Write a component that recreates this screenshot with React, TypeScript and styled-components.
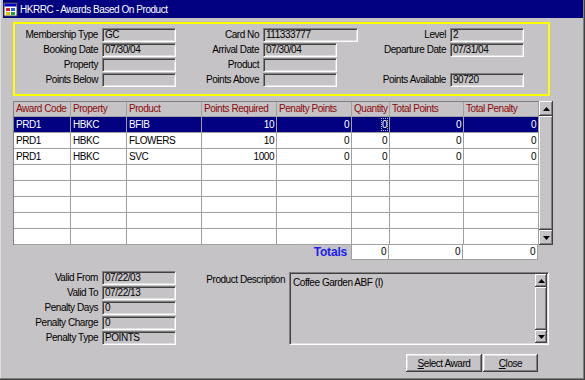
import React from 'react';
import styled, { createGlobalStyle } from 'styled-components';

const GlobalStyle = createGlobalStyle`
	html, body {
		margin: 0;
		padding: 0;
		background: #c6c3c6;
	}
	body {
		font-family: "Liberation Sans", Arial, sans-serif;
	}
`;

const Window = styled.div`
	width: 585px;
	height: 380px;
	box-sizing: border-box;
	padding: 0 2px 2px 3px;
	background: #c6c3c6;
	box-shadow: inset -1px -1px 0 #404040, inset -2px -2px 0 #808080, inset 1px 0 0 #dedede;
	font-family: "Liberation Sans", Arial, sans-serif;
	font-size: 10px;
	letter-spacing: -0.45px;
	color: #000;
	display: flex;
	flex-direction: column;
`;

const TitleBar = styled.div`
	height: 18px;
	flex: none;
	background: #000080;
	color: #fff;
	display: flex;
	align-items: center;
	gap: 2px;
	font-size: 10px;
	white-space: nowrap;
`;

const YellowBox = styled.div`
	margin: 4px 0 0 10px;
	width: 537px;
	height: 74px;
	box-sizing: border-box;
	border: 2px solid #ffff00;
	padding-top: 4px;
`;

const FieldGrid = styled.div<{ columns: string }>`
	display: grid;
	grid-template-columns: ${props => props.columns};
	grid-auto-rows: 14px;
	row-gap: 1px;
	align-items: center;
`;

const Label = styled.div`
	text-align: right;
	padding-right: 4px;
	white-space: nowrap;
	line-height: 14px;
`;

const Field = styled.div<{ width: number }>`
	width: ${props => props.width}px;
	height: 14px;
	box-sizing: border-box;
	border: 1px solid;
	border-color: #808080 #ffffff #ffffff #808080;
	box-shadow: inset 1px 1px 0 #404040, inset -1px -1px 0 #dfdfdf;
	padding-left: 2px;
	line-height: 12px;
	white-space: nowrap;
	overflow: hidden;
`;

const TableArea = styled.div`
	margin: 5px 0 0 10px;
	display: flex;
	align-items: flex-start;
`;

const TableGrid = styled.div<{ columns: string }>`
	display: grid;
	grid-template-columns: ${props => props.columns};
	border-top: 1px solid #808080;
	border-left: 1px solid #808080;
	background: #fff;
`;

const HeadCell = styled.div`
	height: 15px;
	box-sizing: border-box;
	background: #c6c3c6;
	color: #8b0a0a;
	border-right: 1px solid #a0a0a0;
	border-bottom: 1px solid #a0a0a0;
	padding-left: 2px;
	line-height: 14px;
	white-space: nowrap;
	overflow: hidden;
`;

const Cell = styled.div<{ right?: boolean, selected?: boolean }>`
	height: 16px;
	box-sizing: border-box;
	background: ${props => props.selected ? '#000080' : '#fff'};
	color: ${props => props.selected ? '#fff' : '#000'};
	border-right: 1px solid #a0a0a0;
	border-bottom: 1px solid #a0a0a0;
	padding: 0 2px;
	line-height: 15px;
	text-align: ${props => props.right ? 'right' : 'left'};
	white-space: nowrap;
	overflow: hidden;
`;

const FocusMark = styled.span`
	outline: 1px dotted #c0c0c0;
	outline-offset: 0;
`;

const ScrollBar = styled.div<{ width: number, height: number }>`
	width: ${props => props.width}px;
	height: ${props => props.height}px;
	flex: none;
	display: flex;
	flex-direction: column;
	background: #e4e2e4;
`;

const ScrollButton = styled.div<{ size: number }>`
	height: ${props => props.size}px;
	flex: none;
	display: flex;
	align-items: center;
	justify-content: center;
	background: #c6c3c6;
	box-shadow: inset -1px -1px 0 #404040, inset 1px 1px 0 #ffffff, inset -2px -2px 0 #808080;
`;

const ScrollThumb = styled.div`
	flex: 1;
	background: #c6c3c6;
	box-shadow: inset -1px -1px 0 #404040, inset 1px 1px 0 #ffffff, inset -2px -2px 0 #808080;
`;

const TotalsRow = styled.div`
	margin-left: 10px;
	display: flex;
	height: 15px;
`;

const TotalsLabel = styled.div`
	width: 338px;
	text-align: right;
	padding-right: 4px;
	box-sizing: border-box;
	font-size: 12px;
	font-weight: bold;
	letter-spacing: -0.2px;
	color: #1c1cf0;
	line-height: 15px;
`;

const TotalCell = styled.div<{ width: number, first?: boolean }>`
	width: ${props => props.width}px;
	box-sizing: border-box;
	background: #fff;
	border-right: 1px solid #a0a0a0;
	border-bottom: 1px solid #a0a0a0;
	border-left: ${props => props.first ? '1px solid #a0a0a0' : 'none'};
	text-align: right;
	padding-right: 2px;
	line-height: 14px;
`;

const BottomSection = styled.div`
	margin-top: 11px;
	padding-left: 12px;
	display: flex;
	align-items: flex-start;
`;

const DescLabel = styled(Label)`
	width: 113px;
	box-sizing: border-box;
	margin-top: 2px;
`;

const DescBox = styled.div`
	width: 260px;
	height: 73px;
	margin-top: 1px;
	box-sizing: border-box;
	border: 1px solid;
	border-color: #808080 #ffffff #ffffff #808080;
	box-shadow: inset 1px 1px 0 #404040, inset -1px -1px 0 #dfdfdf;
	display: flex;
	padding: 1px;
`;

const DescText = styled.div`
	flex: 1;
	padding: 3px 2px;
	white-space: nowrap;
`;

const ButtonRow = styled.div`
	margin-top: 9px;
	padding-right: 45px;
	display: flex;
	justify-content: flex-end;
	gap: 1px;
`;

const Button = styled.button<{ width: number }>`
	width: ${props => props.width}px;
	height: 18px;
	border: none;
	padding: 0;
	background: #c6c3c6;
	font: inherit;
	letter-spacing: inherit;
	color: #000;
	box-shadow: inset -1px -1px 0 #404040, inset 1px 1px 0 #ffffff, inset -2px -2px 0 #808080, inset 2px 2px 0 #dfdfdf;
	u {
		text-decoration: underline;
	}
`;

type FieldDef = { label: string, value: string, width?: number } | null;

const topFields: FieldDef[][] = [
	[
		{ label: 'Membership Type', value: 'GC' },
		{ label: 'Card No', value: '111333777', width: 95 },
		{ label: 'Level', value: '2' },
	],
	[
		{ label: 'Booking Date', value: '07/30/04' },
		{ label: 'Arrival Date', value: '07/30/04' },
		{ label: 'Departure Date', value: '07/31/04' },
	],
	[
		{ label: 'Property', value: '' },
		{ label: 'Product', value: '' },
		null,
	],
	[
		{ label: 'Points Below', value: '' },
		{ label: 'Points Above', value: '' },
		{ label: 'Points Available', value: '90720' },
	],
];

const penaltyFields = [
	{ label: 'Valid From', value: '07/22/03' },
	{ label: 'Valid To', value: '07/22/13' },
	{ label: 'Penalty Days', value: '0' },
	{ label: 'Penalty Charge', value: '0' },
	{ label: 'Penalty Type', value: 'POINTS' },
];

const columns = [
	{ title: 'Award Code', width: 57, right: false },
	{ title: 'Property', width: 56, right: false },
	{ title: 'Product', width: 75, right: false },
	{ title: 'Points Required', width: 75, right: true },
	{ title: 'Penalty Points', width: 75, right: true },
	{ title: 'Quantity', width: 38, right: true },
	{ title: 'Total Points', width: 74, right: true },
	{ title: 'Total Penalty', width: 75, right: true },
];

const rows: string[][] = [
	['PRD1', 'HBKC', 'BFIB', '10', '0', '0', '0', '0'],
	['PRD1', 'HBKC', 'FLOWERS', '10', '0', '0', '0', '0'],
	['PRD1', 'HBKC', 'SVC', '1000', '0', '0', '0', '0'],
	['', '', '', '', '', '', '', ''],
	['', '', '', '', '', '', '', ''],
	['', '', '', '', '', '', '', ''],
	['', '', '', '', '', '', '', ''],
	['', '', '', '', '', '', '', ''],
];

const Arrow = ({ down }: { down?: boolean }) => (
	<svg width="7" height="4" viewBox="0 0 7 4">
		<polygon points={down ? '0,0 7,0 3.5,4' : '3.5,0 7,4 0,4'} fill="#000" />
	</svg>
);

const AppIcon = () => (
	<svg width="15" height="15" viewBox="0 0 15 15">
		<rect x="1" y="1" width="13" height="13" fill="#fff" stroke="#404040" />
		<rect x="1.5" y="1.5" width="12" height="3" fill="#0000c0" />
		<rect x="3" y="6" width="4" height="3" fill="#e02020" />
		<rect x="8" y="6" width="4" height="3" fill="#2060e0" />
		<rect x="3" y="10" width="4" height="3" fill="#e0c000" />
		<rect x="8" y="10" width="4" height="3" fill="#20a040" />
	</svg>
);

const Scroller = ({ width, height, button }: { width: number, height: number, button: number }) => (
	<ScrollBar width={width} height={height}>
		<ScrollButton size={button}><Arrow /></ScrollButton>
		<ScrollThumb />
		<ScrollButton size={button}><Arrow down /></ScrollButton>
	</ScrollBar>
);

const App = () => {
	const gridColumns = columns.map(c => `${c.width}px`).join(' ');

	return (
		<>
			<GlobalStyle />
			<Window>
				<TitleBar>
					<AppIcon />
					<span>HKRRC - Awards Based On Product</span>
				</TitleBar>

				<YellowBox>
					<FieldGrid columns="87px 74px 87px 95px 92px 74px">
						{topFields.map((row, r) => row.map((f, c) => f ? (
							<React.Fragment key={`${r}-${c}`}>
								<Label>{f.label}</Label>
								<Field width={f.width ?? 74}>{f.value}</Field>
							</React.Fragment>
						) : (
							<React.Fragment key={`${r}-${c}`}>
								<div />
								<div />
							</React.Fragment>
						)))}
					</FieldGrid>
				</YellowBox>

				<TableArea>
					<TableGrid columns={gridColumns}>
						{columns.map(c => <HeadCell key={c.title}>{c.title}</HeadCell>)}
						{rows.map((row, r) => row.map((v, c) => (
							<Cell key={`${r}-${c}`} right={columns[c].right} selected={r === 0}>
								{r === 0 && c === 5 ? <FocusMark>{v}</FocusMark> : v}
							</Cell>
						)))}
					</TableGrid>
					<Scroller width={14} height={144} button={15} />
				</TableArea>

				<TotalsRow>
					<TotalsLabel>Totals</TotalsLabel>
					<TotalCell width={38} first>0</TotalCell>
					<TotalCell width={74}>0</TotalCell>
					<TotalCell width={75}>0</TotalCell>
				</TotalsRow>

				<BottomSection>
					<FieldGrid columns="87px 74px">
						{penaltyFields.map(f => (
							<React.Fragment key={f.label}>
								<Label>{f.label}</Label>
								<Field width={74}>{f.value}</Field>
							</React.Fragment>
						))}
					</FieldGrid>
					<DescLabel>Product Description</DescLabel>
					<DescBox>
						<DescText>Coffee Garden ABF (I)</DescText>
						<Scroller width={12} height={69} button={13} />
					</DescBox>
				</BottomSection>

				<ButtonRow>
					<Button width={76}><u>S</u>elect Award</Button>
					<Button width={55}><u>C</u>lose</Button>
				</ButtonRow>
			</Window>
		</>
	);
};

export default App;
